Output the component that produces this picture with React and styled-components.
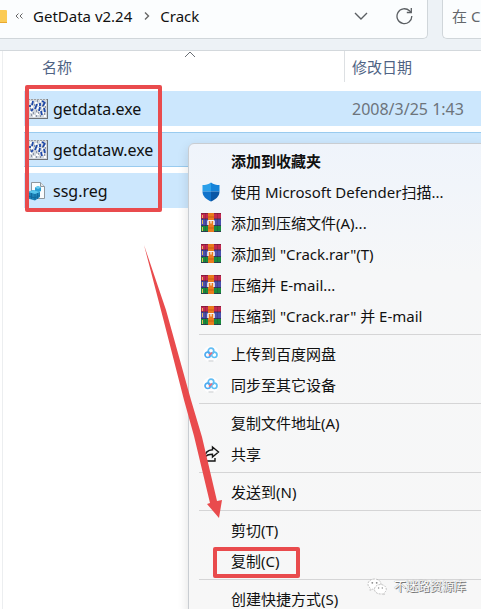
import React from "react";
import styled, { createGlobalStyle } from "styled-components";

const RED = "#e94b4d";

const GlobalStyle = createGlobalStyle`
  * { box-sizing: border-box; }
  body {
    margin: 0;
    background: #fff;
    color: #111;
    font-family: "Noto Sans", "Noto Sans CJK SC", sans-serif;
    font-size: 15px;
  }
  button, input {
    font: inherit;
    color: inherit;
    background: none;
    border: 0;
    padding: 0;
  }
  svg { display: block; flex: none; }
`;

const Window = styled.div`
  position: relative;
  height: 100vh;
  overflow: hidden;
`;

const Toolbar = styled.header`
  display: flex;
  gap: 14px;
  padding-bottom: 11px;
  background: #edf2f6;
  border-bottom: 1px solid #d3d8dc;
`;

const AddressBar = styled.nav`
  flex: 1;
  display: flex;
  align-items: center;
  height: 39px;
  padding: 0 14px 6px 0;
  background: #fbfdfe;
  border: solid #d0d6da;
  border-width: 0 1px 1px 0;
  border-radius: 0 0 5px 0;
`;

const Crumb = styled.button`
  white-space: nowrap;
`;

const Tools = styled.div`
  display: flex;
  align-items: center;
  gap: 28px;
  margin-left: auto;
  color: #5b5f63;
`;

const SearchBox = styled.label`
  flex: 0 0 39px;
  height: 39px;
  padding: 0 0 6px 9px;
  background: #fbfdfe;
  border: solid #d0d6da;
  border-width: 0 0 1px 1px;
  border-radius: 0 0 0 5px;
  input {
    width: 100%;
    height: 32px;
  }
  input::placeholder {
    color: #63676b;
    opacity: 1;
  }
`;

const Pane = styled.main`
  margin-left: 2px;
  padding-left: 21px;
  border-left: 1px solid #eceef0;
  min-height: 100%;
`;

const FileTable = styled.table`
  width: 100%;
  table-layout: fixed;
  border-spacing: 0;
`;

const HeadCell = styled.th`
  position: relative;
  width: ${(p) => p.$width || "auto"};
  padding: 0 0 9px;
  font-weight: 400;
  text-align: left;
  color: #4f6384;
  > div {
    height: 31px;
    line-height: 32px;
    padding-left: ${(p) => p.$indent};
    border-left: ${(p) => (p.$divider ? "1px solid #dde0e3" : "0")};
  }
  > svg {
    position: absolute;
    top: 0;
    left: 50%;
  }
`;

const FileCell = styled.td`
  padding: 0 0 6px;
  font-size: 16px;
  > div {
    display: flex;
    align-items: center;
    height: 35px;
    padding-left: ${(p) => p.$indent};
    background: #cce7fd;
    border: solid ${(p) => (p.$focused ? "#99cbef" : "#cce7fd")};
    border-width: 1px 0;
    color: ${(p) => p.$color || "#111"};
  }
`;

const FileIcon = styled.span`
  width: 25px;
`;

const Menu = styled.div`
  position: absolute;
  top: 143px;
  left: 188px;
  right: -8px;
  padding: 1px 0;
  background: linear-gradient(#eff4fb, #f6f7f8 130px, #f7f7f7);
  border: 1px solid #c9cdd2;
  border-radius: 6px;
  box-shadow: 0 4px 12px rgba(0, 0, 0, 0.12);
`;

const MenuItem = styled.button`
  display: flex;
  align-items: center;
  gap: 10px;
  width: 100%;
  height: 31px;
  padding-left: 12px;
  font-weight: ${(p) => (p.$bold ? 700 : 400)};
  white-space: nowrap;
`;

const MenuIcon = styled.span`
  display: flex;
  justify-content: center;
  width: 20px;
`;

const Separator = styled.hr`
  height: 1px;
  margin: 3px 0 3px 10px;
  border: 0;
  background: #d5d5d6;
`;

const Highlight = styled.div`
  position: absolute;
  top: ${(p) => p.$top}px;
  left: ${(p) => p.$left}px;
  width: ${(p) => p.$width}px;
  height: ${(p) => p.$height}px;
  border: 4px solid ${RED};
  border-radius: 2px;
`;

const Arrow = styled.svg`
  position: absolute;
  top: 240px;
  left: 140px;
`;

const Watermark = styled.div`
  position: absolute;
  right: 15px;
  bottom: 12px;
  display: flex;
  align-items: center;
  gap: 7px;
  font-size: 12px;
  line-height: 20px;
  color: #fff;
  text-shadow: 1px 1px 0 #777, 0 0 1px #666;
`;

const ExeIcon = () => (
  <svg width="20" height="20" viewBox="0 0 20 20">
    <rect width="20" height="20" fill="#d3d8de" />
    <path d="M0 .5h20M.5 0v20" stroke="#9a9ea2" strokeDasharray="2 1" />
    <path d="M0 19.500h20M19.500 0v20" stroke="#6d7176" />
    <path
      d="M2 3h2M7 4h2M12 2h1M16 6h2M3 8h2M9 9h2M14 9h1M2 13h2M8 15h3M14 14h2M5 17h2M16 17h2M11 12h2M10 6h1"
      stroke="#fff"
      strokeWidth="2"
    />
    <path
      d="M5 2L4 6M2 6v2M9 5L7 10M12 4v3M14 2l2 1M17 3l-2 4M12 8l-1 4M16 9l1 4M5 10L3 12M13 12l1 4"
      fill="none"
      stroke="#2049a8"
      strokeWidth="1.800"
    />
    <path
      d="M6 6h1M9 2h1M14 7h1M8 12h1M5 14h1M10 14h1M3 16h1M8 17h1M12 17h1M16 15h1M2 10h1M17 8h1"
      stroke="#42506e"
    />
  </svg>
);

const RegIcon = () => (
  <svg width="18" height="20" viewBox="0 0 18 20">
    <path d="M3.500 1.500h9l4 4v12h-13z" fill="#fafcfd" stroke="#8e979e" />
    <path d="M12.500 1.500v4h4" fill="#e2e7ea" stroke="#8e979e" />
    <path d="M7 6.500l3-1.500 3 1.500v3.500l-3 1.500-3-1.500z" fill="#2b9fd4" />
    <path d="M7 6.500l3-1.500 3 1.500-3 1.500z" fill="#6accf0" />
    <path d="M0 11l5-2 7 2v5l-5 3.500-7-2z" fill="#1d83b8" />
    <path d="M0 11l5-2 7 2-5 2z" fill="#56c4ec" />
    <path d="M3.500 12v6M7 13v6M0 15l7 2 5-3M9.500 12v6" fill="none" stroke="#0e6599" strokeWidth=".8" />
  </svg>
);

const ShieldIcon = () => (
  <svg width="18" height="20" viewBox="0 0 18 20">
    <path d="M9 .5C6.500 2.500 3.500 3 .5 3v6.500H9z" fill="#2ba0ea" />
    <path d="M9 .5c2.500 2 5.500 2.500 8.500 2.500v6.500H9z" fill="#1583d9" />
    <path d="M.5 9.500H9v10C4.500 17.500.5 14.500.5 9.500z" fill="#1173cb" />
    <path d="M17.500 9.500H9v10c4.500-2 8.500-5 8.500-10z" fill="#0a57a6" />
  </svg>
);

const RarIcon = () => (
  <svg width="20" height="19" viewBox="0 0 20 19">
    <rect width="20" height="6" fill="#c2274f" />
    <rect y="6" width="20" height="7" fill="#4a4fae" />
    <rect y="13" width="20" height="6" fill="#188a3c" />
    <path d="M0 .5h20" stroke="#8c1d3c" />
    <path d="M0 6h20M0 12.500h20M0 18.500h20" stroke="#2d2f55" strokeWidth=".8" />
    <path d="M1.500 2v3M1.500 7v4M1.500 14v4" stroke="#e8b95c" />
    <path d="M4.500 0v19M16.500 0v19" stroke="#222" strokeOpacity=".2" />
    <rect x="7" width="6" height="19" fill="#ea7a1d" />
    <path d="M7 4h6M7 15h6" stroke="#c45f12" />
    <path d="M7 12V7.500M13 12V7.500" stroke="#f5f2f0" strokeWidth="1.600" />
    <path d="M7 7.500h6M10 7.500v3" stroke="#f5f2f0" strokeWidth="1.200" />
  </svg>
);

const CloudIcon = () => (
  <svg width="16" height="16" viewBox="0 0 16 16" fill="none">
    <circle cx="8" cy="8" r="8" fill="#fdfdfe" />
    <circle cx="8" cy="5" r="2.800" stroke="#62bdf4" strokeWidth="1.700" />
    <circle cx="4.700" cy="8.800" r="2.700" stroke="#4fabf0" strokeWidth="1.700" />
    <circle cx="11.300" cy="8.800" r="2.700" stroke="#5fc1f4" strokeWidth="1.700" />
    <path d="M6 9.500L9 6.500" stroke="#ef6b7a" strokeWidth="1.700" />
    <path d="M5.500 15h5" stroke="#c6c9cc" />
  </svg>
);

const ShareIcon = () => (
  <svg width="18" height="18" viewBox="0 0 18 18" fill="none" stroke="#151515" strokeWidth="1.400">
    <path d="M10.500 2l6 5-6 5V9.300C7 9.300 4.500 10 2.500 12.500 3 8 6 5 10.500 4.800z" />
    <path d="M3 9v7h10v-3" />
  </svg>
);

const WechatIcon = () => (
  <svg width="20" height="18" viewBox="0 0 20 18">
    <g fill="#fff" stroke="#aaa" strokeWidth=".7" strokeDasharray="2 1">
      <path d="M7.500 1C3.700 1 1 3.300 1 6.200c0 1.700.9 3 2.400 4L3 12.500l2.500-1.300c5 .8 8.500-1.500 8.500-5C14 3.300 11.300 1 7.500 1z" />
      <path d="M13.500 6.500c-3.300 0-6 2-6 4.800 0 3 3.300 5.300 7.500 4.500l2.300 1.200-.5-2c1.500-1 2.500-2.200 2.500-3.700 0-2.800-2.600-4.800-5.800-4.800z" />
    </g>
    <g fill="#888">
      <circle cx="5.300" cy="4.800" r=".9" />
      <circle cx="9.700" cy="4.800" r=".9" />
      <circle cx="11.600" cy="10" r=".7" />
      <circle cx="15.300" cy="10" r=".7" />
    </g>
  </svg>
);

const files = [
  { name: "getdata.exe", icon: <ExeIcon />, date: "2008/3/25 1:43" },
  { name: "getdataw.exe", icon: <ExeIcon />, focused: true },
  { name: "ssg.reg", icon: <RegIcon /> },
];

const menuGroups = [
  [
    { label: "添加到收藏夹", bold: true },
    { label: "使用 Microsoft Defender扫描...", icon: <ShieldIcon /> },
    { label: "添加到压缩文件(A)...", icon: <RarIcon /> },
    { label: '添加到 "Crack.rar"(T)', icon: <RarIcon /> },
    { label: "压缩并 E-mail...", icon: <RarIcon /> },
    { label: '压缩到 "Crack.rar" 并 E-mail', icon: <RarIcon /> },
  ],
  [
    { label: "上传到百度网盘", icon: <CloudIcon /> },
    { label: "同步至其它设备", icon: <CloudIcon /> },
  ],
  [{ label: "复制文件地址(A)" }, { label: "共享", icon: <ShareIcon /> }],
  [{ label: "发送到(N)" }],
  [{ label: "剪切(T)" }, { label: "复制(C)" }],
  [{ label: "创建快捷方式(S)" }],
];

function Address() {
  return (
    <AddressBar>
      <svg width="33" height="20" viewBox="0 0 33 20" fill="none">
        <rect x="-8" y="4" width="15" height="13" rx="1" fill="#fbcb55" />
        <path d="M0 16.500h7" stroke="#e9a92f" />
        <path d="M18.500 7.500L16 10l2.500 2.500M22.500 7.500L20 10l2.500 2.500" stroke="#666" />
      </svg>
      <Crumb>GetData v2.24</Crumb>
      <svg width="28" height="20" viewBox="0 0 28 20" fill="none">
        <path d="M13 6.500l3.500 3.500-3.500 3.500" stroke="#666" strokeWidth="1.400" />
      </svg>
      <Crumb>Crack</Crumb>
      <Tools>
        <button aria-label="Previous locations">
          <svg width="14" height="14" viewBox="0 0 14 14" fill="none">
            <path d="M1 4l6 6 6-6" stroke="currentColor" strokeWidth="1.400" />
          </svg>
        </button>
        <button aria-label="Refresh">
          <svg width="17" height="18" viewBox="0 0 17 18" fill="none" stroke="currentColor" strokeWidth="1.300">
            <path d="M15.800 9A7.400 7.400 0 1 1 13.500 3.800L15 5.300" />
            <path d="M15.300 1v4.500h-4.500" />
          </svg>
        </button>
      </Tools>
    </AddressBar>
  );
}

function FileList() {
  return (
    <FileTable>
      <thead>
        <tr>
          <HeadCell $width="320px" $indent="18px">
            <div>名称</div>
            <svg width="12" height="7" viewBox="0 0 12 7" fill="none">
              <path d="M1 6l5-5 5 5" stroke="#6a6f75" />
            </svg>
          </HeadCell>
          <HeadCell $indent="7px" $divider>
            <div>修改日期</div>
          </HeadCell>
        </tr>
      </thead>
      <tbody>
        {files.map((file) => (
          <tr key={file.name}>
            <FileCell $indent="4px" $focused={file.focused}>
              <div>
                <FileIcon>{file.icon}</FileIcon>
                {file.name}
              </div>
            </FileCell>
            <FileCell $indent="8px" $focused={file.focused} $color="#6d747b">
              <div>{file.date}</div>
            </FileCell>
          </tr>
        ))}
      </tbody>
    </FileTable>
  );
}

function ContextMenu() {
  return (
    <Menu>
      {menuGroups.map((group, i) => (
        <React.Fragment key={i}>
          {i > 0 && <Separator />}
          {group.map((item) => (
            <MenuItem key={item.label} $bold={item.bold}>
              <MenuIcon>{item.icon}</MenuIcon>
              {item.label}
            </MenuItem>
          ))}
        </React.Fragment>
      ))}
    </Menu>
  );
}

function App() {
  return (
    <Window>
      <GlobalStyle />
      <Toolbar>
        <Address />
        <SearchBox>
          <input type="text" aria-label="Search" placeholder="在 Crack 中搜索" />
        </SearchBox>
      </Toolbar>
      <Pane>
        <FileList />
      </Pane>
      <ContextMenu />
      <Highlight $top={85} $left={25} $width={137} $height={127} />
      <Highlight $top={547} $left={213} $width={87} $height={31} />
      <Arrow width="90" height="285" viewBox="140 240 90 285">
        <path d="M144 245L166 310L191 400L202 437L217 501L222 500L219 518L207 504L210 503L194 436L184 400L163 318z" fill={RED} />
      </Arrow>
      <Watermark>
        <WechatIcon />
        不迷路资源库
      </Watermark>
    </Window>
  );
}

export default App;
